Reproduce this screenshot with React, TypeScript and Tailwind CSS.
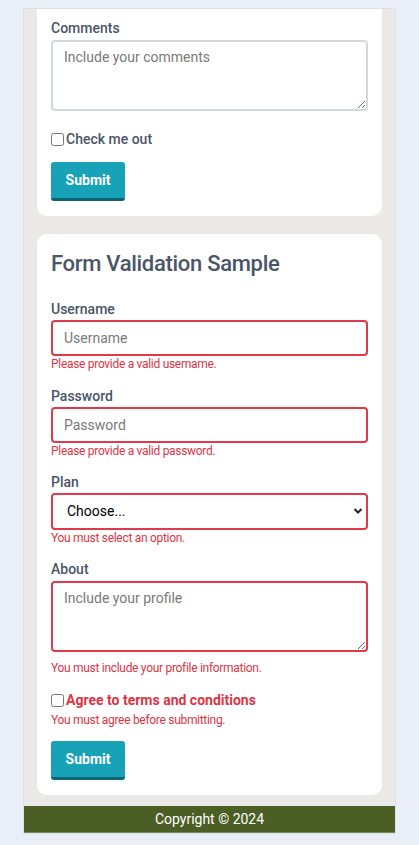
import React from "react";

const font = { fontFamily: "Roboto, 'Noto Sans', sans-serif" };

function Label({ children }: { children: React.ReactNode }) {
  return <label className="block text-[14px] leading-5 font-medium text-[#4a5568]">{children}</label>;
}

function Error({ children }: { children: React.ReactNode }) {
  return <div className="text-[12px] leading-4 tracking-[-0.3px] text-[#dc3545]">{children}</div>;
}

function SubmitButton() {
  return (
    <button className="h-[39px] w-[74px] rounded-[3px] bg-[#17a2b8] border-b-[3px] border-[#0d6674] text-[14px] font-bold text-white">
      Submit
    </button>
  );
}

export default function App() {
  return (
    <div className="min-h-[845px] bg-[#e9eef7] pt-2" style={font}>
      <div className="mx-[23px] border border-[#dde1e6] bg-[#ebe8e8]">
        <div className="mx-[13px]">
          {/* first form (scrolled) */}
          <div className="rounded-b-[10px] bg-white px-[14px] pt-[9px] pb-[15px]">
            <Label>Comments</Label>
            <textarea
              placeholder="Include your comments"
              className="mt-[2px] block h-[71px] w-full resize-y rounded-[4px] border-2 border-[#d3d8de] px-[11px] py-[5px] text-[14px] text-[#333] placeholder:text-[#7a7a7a] outline-none"
            />
            <div className="mt-[18px] flex items-center gap-[2px]">
              <input type="checkbox" className="h-[13px] w-[13px]" />
              <span className="text-[14px] leading-5 font-medium text-[#4a5568]">Check me out</span>
            </div>
            <div className="mt-[13px]">
              <SubmitButton />
            </div>
          </div>

          {/* validation form */}
          <div className="mt-[18px] rounded-[10px] bg-white px-[14px] pt-[16px] pb-[15px]">
            <h2 className="text-[22px] leading-7 font-medium tracking-[-0.3px] text-[#4a5568]">Form Validation Sample</h2>

            <div className="mt-[21px]">
              <Label>Username</Label>
              <input
                placeholder="Username"
                className="mt-[1px] block h-9 w-full rounded-[4px] border-2 border-[#e03a4a] px-[11px] text-[14px] placeholder:text-[#7a7a7a] outline-none"
              />
              <Error>Please provide a valid username.</Error>
            </div>

            <div className="mt-[14px]">
              <Label>Password</Label>
              <input
                placeholder="Password"
                className="mt-[1px] block h-9 w-full rounded-[4px] border-2 border-[#e03a4a] px-[11px] text-[14px] placeholder:text-[#7a7a7a] outline-none"
              />
              <Error>Please provide a valid password.</Error>
            </div>

            <div className="mt-[13px]">
              <Label>Plan</Label>
              <div className="relative mt-[1px]">
                <select className="block h-[37px] w-full appearance-none rounded-[4px] border-2 border-[#e03a4a] bg-white pl-[14px] text-[14px] text-black outline-none">
                  <option>Choose...</option>
                </select>
                <svg
                  className="pointer-events-none absolute right-[5px] top-[14px]"
                  width="10"
                  height="8"
                  viewBox="0 0 10 8"
                  fill="none"
                  stroke="#222"
                  strokeWidth="2"
                >
                  <path d="M1.5 2l3.5 3.5L8.5 2" />
                </svg>
              </div>
              <Error>You must select an option.</Error>
            </div>

            <div className="mt-[13px]">
              <Label>About</Label>
              <textarea
                placeholder="Include your profile"
                className="mt-[2px] h-[71px] w-full resize-y rounded-[4px] border-2 border-[#e03a4a] px-[11px] py-[5px] text-[14px] placeholder:text-[#7a7a7a] outline-none align-bottom"
              />
              <div className="mt-[8px]">
                <Error>You must include your profile information.</Error>
              </div>
            </div>

            <div className="mt-[14px] flex items-center gap-[2px]">
              <input type="checkbox" className="h-[13px] w-[13px]" />
              <span className="text-[14px] leading-5 font-bold text-[#dc3545]">Agree to terms and conditions</span>
            </div>
            <div className="mt-[2px]">
              <Error>You must agree before submitting.</Error>
            </div>

            <div className="mt-[13px]">
              <SubmitButton />
            </div>
          </div>
        </div>

        <footer className="mt-[11px] border-b border-[#6f8f62] bg-[#4b5e24] py-[3px] text-center text-[14px] leading-5 text-white">
          Copyright © 2024
        </footer>
      </div>
    </div>
  );
}
